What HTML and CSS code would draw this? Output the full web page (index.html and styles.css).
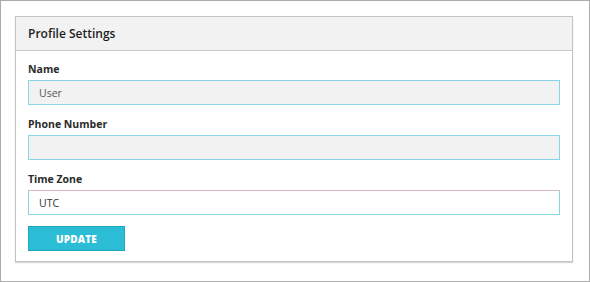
FILE: index.html
```html
<!DOCTYPE html>
<html lang="en">
<head>
    <meta charset="UTF-8">
    <meta name="viewport" content="width=device-width, initial-scale=1.0">
    <title>Profile Settings</title>
    <link rel="stylesheet" href="styles.css">
</head>
<body>
    <div id="frame">
        <div class="panel">
            <div class="panel-head">Profile Settings</div>
            <form class="panel-body">
                <div class="field">
                    <label class="field-label" for="name">Name</label>
                    <input type="text" class="field-input" id="name" value="User" disabled>
                </div>
                <div class="field">
                    <label class="field-label" for="phone">Phone Number</label>
                    <input type="text" class="field-input" id="phone" disabled>
                </div>
                <div class="field">
                    <label class="field-label" for="tz">Time Zone</label>
                    <input type="text" class="field-input" id="tz" value="UTC">
                </div>
                <button type="button" class="btn">UPDATE</button>
            </form>
        </div>
    </div>
</body>
</html>
```

FILE: styles.css
```css
body{
    margin: 0;
    font-family: "Open Sans", "DejaVu Sans", sans-serif;
    background: #fff;
}
#frame{
    width: 590px;
    height: 282px;
    box-sizing: border-box;
    border: 1px solid #ababab;
    padding: 15px 16px 0 14px;
}
.panel{
    border: 1px solid #c4c4c4;
    box-shadow: 0 1px 1px #d6d6d6;
}
.panel-head{
    height: 33px;
    line-height: 33px;
    background: #f2f2f2;
    border-bottom: 1px solid #c8c8c8;
    padding-left: 12px;
    font-size: 12px;
    font-weight: 600;
    color: #1e1e1e;
}
.panel-body{
    padding: 11px 12px 10px 12px;
}
.field{
    margin-bottom: 12px;
}
.field:last-of-type{
    margin-bottom: 0;
}
.field-label{
    display: block;
    height: 14px;
    line-height: 14px;
    margin-bottom: 4px;
    font-size: 10.5px;
    font-weight: 700;
    color: #2a2a2a;
}
.field-input{
    display: block;
    width: 100%;
    height: 25px;
    box-sizing: border-box;
    border: 1px solid #86d6e6;
    background: #f2f2f2;
    padding: 0 10px;
    font-family: inherit;
    font-size: 10.5px;
    color: #555;
    outline: none;
}
#tz{
    background: #fff;
    border-top-color: #dcb8bc;
    color: #333;
}
.btn{
    display: block;
    width: 97px;
    height: 25px;
    margin-top: 11px;
    border: 1px solid #1ea9c1;
    background: #2bbcd6;
    color: #fff;
    font-family: inherit;
    font-size: 10px;
    font-weight: 800;
    letter-spacing: 0.2px;
}
```
